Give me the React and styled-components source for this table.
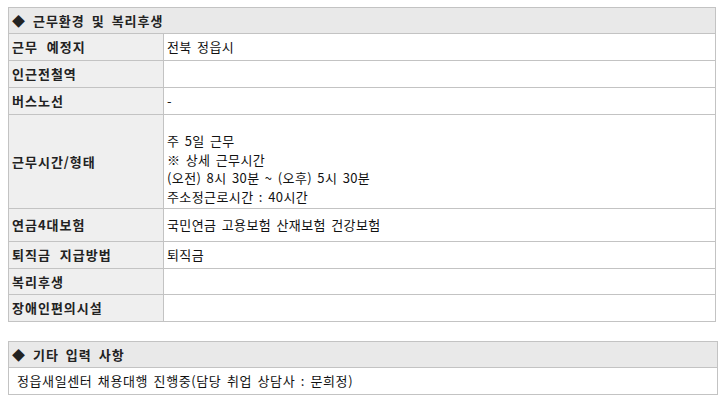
import React from "react";
import styled, { createGlobalStyle } from "styled-components";

const Global = createGlobalStyle`
  html, body { margin: 0; padding: 0; background: #ffffff; }
  body {
    font-family: "Noto Sans CJK KR", "Noto Sans", sans-serif;
    font-size: 13px;
    color: #222222;
  }
`;

const Page = styled.div`
  padding: 7px 0 0 8px;
  display: flex;
  flex-direction: column;
  gap: 19px;
`;

const Table = styled.table`
  width: ${(p) => p.$width}px;
  border-collapse: collapse;
  table-layout: fixed;
  font-family: "Noto Sans CJK KR", "Noto Sans", sans-serif;
  font-size: 13px;
`;

const LabelCol = styled.col`
  width: 155px;
`;

const HeadCell = styled.th`
  background: #e9e9e9;
  border: 1px solid #c3c3c3;
  height: 25px;
  padding: 0 3px;
  text-align: left;
  font-weight: bold;
  font-size: 13px;
  letter-spacing: 1px;
  color: #222222;
  word-spacing: 3px;
  line-height: 18px;
`;

const Label = styled.th`
  background: #efefef;
  border: 1px solid #c3c3c3;
  height: ${(p) => p.$h || 26}px;
  padding: 0 3px;
  text-align: left;
  vertical-align: middle;
  font-weight: bold;
  font-size: 13px;
  letter-spacing: 1px;
  color: #222222;
  word-spacing: 5px;
  line-height: 18px;
`;

const Value = styled.td`
  border: 1px solid #c3c3c3;
  height: ${(p) => p.$h || 26}px;
  padding: ${(p) => p.$pt || 0}px 3px 0 3px;
  vertical-align: ${(p) => (p.$pt ? "top" : "middle")};
  color: #111111;
  font-size: 13px;
  letter-spacing: 0.4px;
  word-spacing: 2px;
  line-height: 18.5px;
  box-sizing: border-box;
`;

const Note = styled.td`
  border: 1px solid #c3c3c3;
  height: 26px;
  padding: 0 8px;
  vertical-align: middle;
  color: #111111;
  font-size: 13px;
  letter-spacing: 0.6px;
  word-spacing: 2px;
  line-height: 18px;
`;

const Line = styled.div``;

const rows = [
  { label: "근무 예정지", value: "전북 정읍시" },
  { label: "인근전철역", value: "" },
  { label: "버스노선", value: "-" },
  {
    label: "근무시간/형태",
    lines: ["주 5일 근무", "※ 상세 근무시간", "(오전) 8시 30분 ~ (오후) 5시 30분", "주소정근로시간 : 40시간"],
    h: 93,
    pt: 17,
  },
  { label: "연금4대보험", value: "국민연금 고용보험 산재보험 건강보험", h: 32 },
  { label: "퇴직금 지급방법", value: "퇴직금" },
  { label: "복리후생", value: "", h: 25 },
  { label: "장애인편의시설", value: "" },
];

export default function App() {
  return (
    <>
      <Global />
      <Page>
        <Table $width={708}>
          <colgroup>
            <LabelCol />
            <col />
          </colgroup>
          <thead>
            <tr>
              <HeadCell colSpan={2}>◆ 근무환경 및 복리후생</HeadCell>
            </tr>
          </thead>
          <tbody>
            {rows.map((r) => (
              <tr key={r.label}>
                <Label $h={r.h}>{r.label}</Label>
                <Value $h={r.h} $pt={r.pt}>
                  {r.lines ? r.lines.map((l) => <Line key={l}>{l}</Line>) : r.value}
                </Value>
              </tr>
            ))}
          </tbody>
        </Table>
        <Table $width={710}>
          <thead>
            <tr>
              <HeadCell>◆ 기타 입력 사항</HeadCell>
            </tr>
          </thead>
          <tbody>
            <tr>
              <Note>정읍새일센터 채용대행 진행중(담당 취업 상담사 : 문희정)</Note>
            </tr>
          </tbody>
        </Table>
      </Page>
    </>
  );
}
